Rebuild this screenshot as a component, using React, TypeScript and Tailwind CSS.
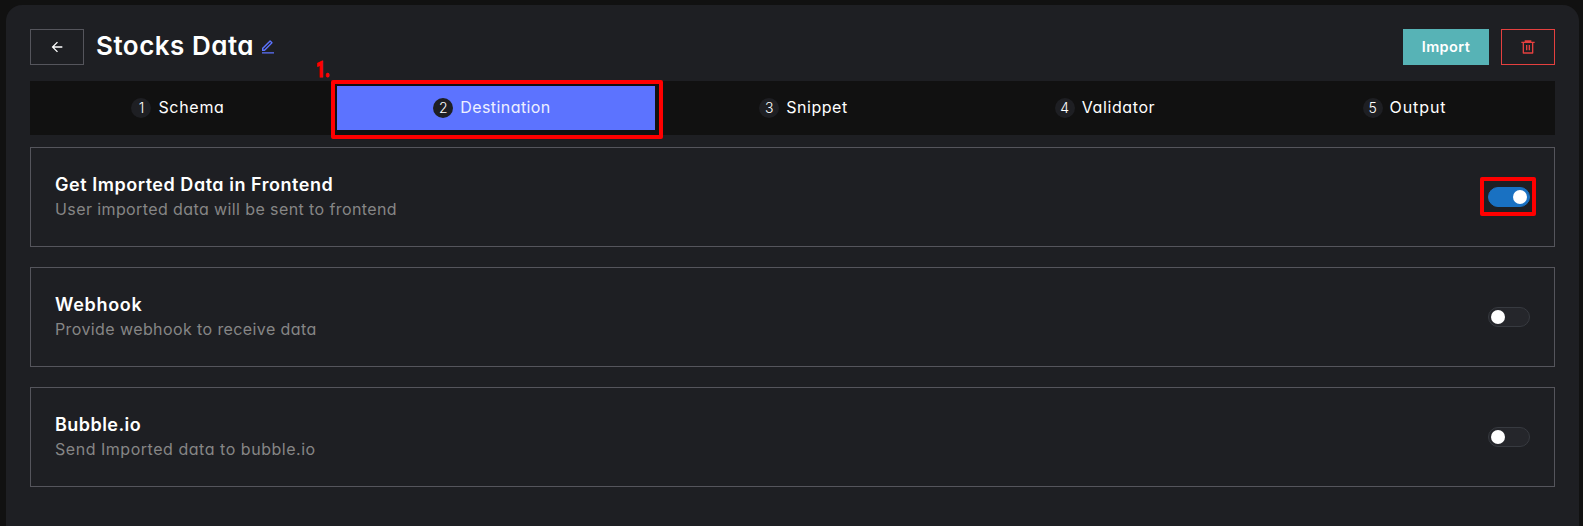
import { MdArrowBack } from "react-icons/md";
import { RiDeleteBin6Line, RiEditLine } from "react-icons/ri";

const tabs = [
  { label: "Schema", style: "pr-2.5", text: "tracking-[0.7px]" },
  { label: "Destination", style: "bg-[#5c73ff] pr-2", text: "tracking-[0.42px]", active: true },
  { label: "Snippet", style: "pr-[9px]", text: "tracking-[0.55px]" },
  { label: "Validator", style: "pr-2", text: "tracking-[0.6px]" },
  { label: "Output", style: "pr-1", text: "tracking-[0.9px]" },
];

const destinations = [
  {
    title: "Get Imported Data in Frontend",
    titleStyle: "tracking-[0.53px]",
    text: "User imported data will be sent to frontend",
    textStyle: "tracking-[0.4px]",
    on: true,
  },
  {
    title: "Webhook",
    titleStyle: "tracking-[0.7px]",
    text: "Provide webhook to receive data",
    textStyle: "tracking-[0.4px]",
    on: false,
  },
  {
    title: "Bubble.io",
    titleStyle: "tracking-[0.45px]",
    text: "Send Imported data to bubble.io",
    textStyle: "tracking-[0.53px]",
    on: false,
  },
];

function Toggle({ on }: { on: boolean }) {
  return (
    <div
      className={
        on
          ? "flex h-5 w-[42px] items-center justify-end rounded-full border border-[#1971c2] bg-[#1971c2] px-0.5"
          : "flex h-5 w-[42px] items-center rounded-full border border-[#373a40] bg-[#25262b] px-0.5"
      }
    >
      <span className="size-3.5 rounded-full bg-white" />
    </div>
  );
}

export default function App() {
  return (
    <div className="h-[526px] overflow-hidden bg-[#111111] pt-[5px] pr-1 pl-1.5 font-['Inter',sans-serif] text-white [font-feature-settings:'cv11']">
      <div className="h-[540px] rounded-2xl bg-[#1e1f23] px-6 pt-6">
        <header className="flex h-9 items-center">
          <button className="flex h-9 w-[54px] items-center justify-center border border-[#55555c]">
            <MdArrowBack size={16} />
          </button>
          <h1 className="ml-3 w-[158px] pb-[3px] text-[26px] leading-8 font-semibold tracking-[0.5px] whitespace-nowrap">
            Stocks Data
          </h1>
          <RiEditLine size={16} className="ml-[6px] text-[#5c73ff]" />
          <div className="ml-auto flex gap-3">
            <button className="h-9 w-[86px] bg-[#57b3b6] text-[14.5px] font-semibold tracking-[0.4px]">
              Import
            </button>
            <button className="flex h-9 w-[54px] items-center justify-center border border-[#e5403f] text-[#e5403f]">
              <RiDeleteBin6Line size={16} />
            </button>
          </div>
        </header>

        <nav className="relative mt-4 grid h-[54px] grid-cols-[296px_318px_294px_296px_1fr] gap-1.5 bg-[#111111] p-[5px]">
          {tabs.map((tab, i) => (
            <div key={tab.label} className={`flex items-center justify-center gap-[7px] ${tab.style}`}>
              <span className="flex size-5 items-center justify-center rounded-full bg-[#1e1f23] text-[14px] leading-none font-light">
                {i + 1}
              </span>
              <span className={`pb-0.5 text-base leading-6 ${tab.text} ${tab.active ? "text-[#eef0ff]" : ""}`}>
                {tab.label}
              </span>
            </div>
          ))}
          <div className="absolute -top-px left-[301px] h-[59px] w-[332px] rounded-xs border-4 border-[#ff0000]" />
          <span className="absolute -top-[23px] left-[286px] origin-left scale-x-70 font-['Roboto',sans-serif] text-[22px] leading-6 font-black text-[#ff0000] [-webkit-text-stroke:1px_#ff0000]">
            1.
          </span>
        </nav>

        <main className="mt-3 flex flex-col gap-5">
          {destinations.map((item) => (
            <section
              key={item.title}
              className="flex h-[100px] items-center justify-between border border-[#55555c] px-6"
            >
              <div>
                <h2 className={`text-lg leading-6 font-semibold ${item.titleStyle}`}>{item.title}</h2>
                <p className={`text-base leading-6 text-[#868686] ${item.textStyle}`}>{item.text}</p>
              </div>
              <div className="relative">
                <Toggle on={item.on} />
                {item.on && (
                  <div className="absolute -top-2.5 -left-2 h-[39px] w-14 rounded-xs border-4 border-[#ff0000]" />
                )}
              </div>
            </section>
          ))}
        </main>
      </div>
    </div>
  );
}
